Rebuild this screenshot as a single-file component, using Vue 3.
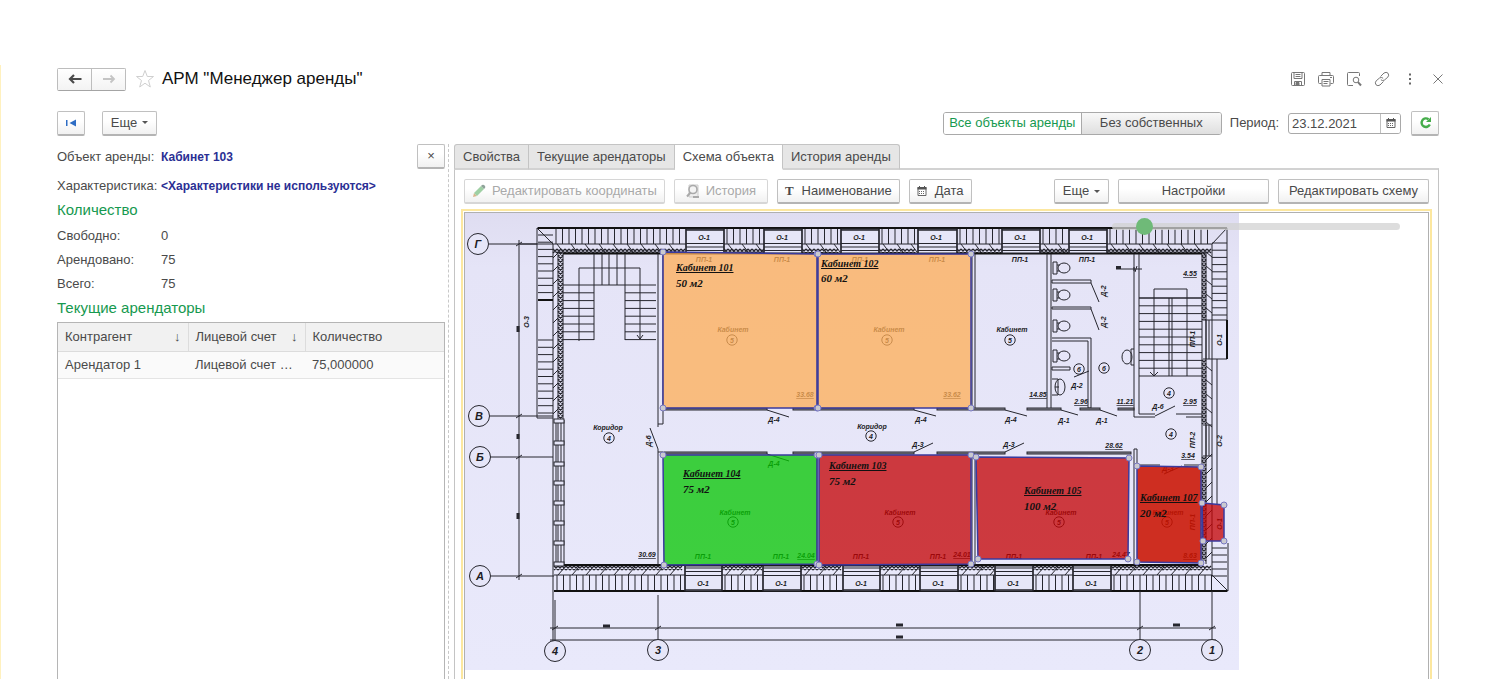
<script setup>
import { ref } from 'vue'

const period = ref('23.12.2021')
const zoom = ref(9)
const scope = ref('all')
const tabs = ['Свойства', 'Текущие арендаторы', 'Схема объекта', 'История аренды']
const activeTab = ref('Схема объекта')
const totals = [
  { label: 'Свободно:', value: '0' },
  { label: 'Арендовано:', value: '75' },
  { label: 'Всего:', value: '75' }
]
const tenants = [{ name: 'Арендатор 1', account: 'Лицевой счет …', amount: '75,000000' }]

const topWindows = [[686, 724], [764, 802], [841, 879], [918, 957], [1002, 1040], [1069, 1107]]
const bottomWindows = [[685, 722], [763, 801], [843, 880], [920, 958], [995, 1033], [1073, 1111]]

function gaps(windows, from, to) {
  const out = []
  let x = from
  for (const [a, b] of windows) {
    out.push([x, a])
    x = b
  }
  out.push([x, to])
  return out
}
const topGaps = gaps(topWindows, 553, 1212)
const bottomGaps = gaps(bottomWindows, 554, 1212)

function ticksX(list, y1, y2, step) {
  let d = ''
  for (const [a, b] of list) for (let x = a + 3; x < b; x += step) d += `M${x} ${y1}V${y2}`
  return d
}
function ticksY(x1, x2, y1, y2, step) {
  let d = ''
  for (let y = y1; y <= y2; y += step) d += `M${x1} ${y}H${x2}`
  return d
}
function slashX(list, y1, y2, step, dx) {
  let d = ''
  for (const [a, b] of list) for (let x = a + 4; x < b - 3; x += step) d += `M${x} ${y1}L${x + dx} ${y2}`
  return d
}
function slashY(x1, x2, from, to, step, dy) {
  let d = ''
  for (let y = from; y < to; y += step) d += `M${x1} ${y}L${x2} ${y + dy}`
  return d
}
function crossX(list, y1, y2) {
  let d = ''
  for (const [a, b] of list) for (let x = a; x + 4 <= b; x += 4) d += `M${x} ${y1}L${x + 4} ${y2}M${x + 4} ${y1}L${x} ${y2}`
  return d
}
function crossY(x1, x2, from, to) {
  let d = ''
  for (let y = from; y + 4 <= to; y += 4) d += `M${x1} ${y}L${x2} ${y + 4}M${x2} ${y}L${x1} ${y + 4}`
  return d
}

const hatch = [
  ticksX(topGaps, 228, 244, 6.5),
  ticksX(bottomGaps, 575, 591, 6.5),
  ticksY(538, 553, 235, 300, 7.2),
  ticksY(538, 553, 340, 418, 7.3),
  ticksY(1212, 1227, 243, 318, 7.2),
  ticksY(1212, 1227, 548, 578, 7),
  slashX(topGaps, 244, 252, 14, 6),
  slashX(bottomGaps, 575, 567, 14, 7),
  slashY(553, 558, 258, 418, 13, -5),
  slashY(1206, 1212, 252, 320, 14, 5),
  slashY(1206, 1212, 366, 425, 14, 5),
  slashY(1206, 1212, 460, 560, 14, -6)
].join('')
const rubble = [
  crossX(topGaps, 249, 253),
  crossX(bottomGaps, 566, 570),
  crossY(558, 563, 252, 420),
  crossY(1202, 1206, 252, 320),
  crossY(1202, 1206, 360, 425),
  crossY(1202, 1206, 457, 564)
].join('')
const treads = [
  ticksY(563, 594, 285, 341, 7.8),
  ticksY(625, 656, 285, 341, 7.8),
  ticksY(1139, 1202, 298, 376, 7.8)
].join('')
const piers = [419, 441, 462, 481, 501, 521, 541, 562]

const walls = [
  [664, 767, 408], [793, 914, 408], [937, 1005, 408], [1027, 1061, 408], [1080, 1100, 408], [1118, 1134, 408],
  [664, 767, 452], [793, 914, 452], [937, 1005, 452], [1027, 1131, 452]
]
const doors =
  'M767 410L789 417M914 410L936 416M1005 410L1027 416M1061 410L1078 415M1100 410L1117 416' +
  'M914 452L933 443M1005 452L1024 443M767 454L789 461M650 428L658 449' +
  'M1091 283L1099 302M1091 309L1099 330M1074 377L1089 371M1155 416L1175 406M1164 474L1182 466'

const toilets = [268, 295, 326, 356]

const axes = [
  { t: 'Г', x: 478, y: 244 }, { t: 'В', x: 479, y: 416 }, { t: 'Б', x: 480, y: 457 }, { t: 'А', x: 480, y: 576 },
  { t: '4', x: 555, y: 651 }, { t: '3', x: 658, y: 650 }, { t: '2', x: 1140, y: 650 }, { t: '1', x: 1212, y: 650 }
]
const marks = [
  ...topWindows.map(([a]) => ({ t: 'О-1', x: a + 18, y: 240 })),
  ...bottomWindows.map(([a]) => ({ t: 'О-1', x: a + 18, y: 586 })),
  ...[704, 782, 860, 937, 1020, 1087].map(x => ({ t: 'ПП-1', x, y: 262 })),
  ...[703, 781, 861, 938, 1014, 1094].map(x => ({ t: 'ПП-1', x, y: 559 })),
  ...[774, 921, 1011].map(x => ({ t: 'Д-4', x, y: 422 })),
  { t: 'Д-4', x: 774, y: 466 },
  { t: 'Д-1', x: 1064, y: 423 }, { t: 'Д-1', x: 1102, y: 423 },
  { t: 'Д-3', x: 918, y: 447 }, { t: 'Д-3', x: 1009, y: 447 },
  { t: 'Д-2', x: 1077, y: 388 }, { t: 'Д-6', x: 1158, y: 409 }, { t: 'Д-3', x: 1168, y: 471 },
  { t: 'Кабинет', x: 733, y: 332 }, { t: 'Кабинет', x: 889, y: 332 }, { t: 'Кабинет', x: 1012, y: 332 },
  { t: 'Кабинет', x: 735, y: 515 }, { t: 'Кабинет', x: 900, y: 515 }, { t: 'Кабинет', x: 1061, y: 515 }, { t: 'Кабинет', x: 1168, y: 515 },
  { t: 'Коридор', x: 608, y: 430 }, { t: 'Коридор', x: 872, y: 429 }
]
const areas = [
  { t: '33.68', x: 805, y: 397 }, { t: '33.62', x: 952, y: 397 }, { t: '14.85', x: 1038, y: 397 },
  { t: '2.96', x: 1081, y: 404 }, { t: '11.21', x: 1125, y: 404 }, { t: '2.95', x: 1190, y: 404 },
  { t: '4.55', x: 1190, y: 276 }, { t: '3.54', x: 1188, y: 458 }, { t: '28.62', x: 1114, y: 448 },
  { t: '30.69', x: 647, y: 557 }, { t: '24.04', x: 806, y: 558 }, { t: '24.01', x: 962, y: 557 },
  { t: '24.47', x: 1121, y: 557 }, { t: '8.63', x: 1190, y: 558 }
]
const upright = [
  { t: 'О-3', x: 529, y: 322 }, { t: 'Д-6', x: 651, y: 441 }, { t: 'Д-2', x: 1106, y: 291 }, { t: 'Д-2', x: 1106, y: 322 },
  { t: 'ПП-1', x: 1195, y: 339 }, { t: 'О-1', x: 1222, y: 340 }, { t: 'ПП-2', x: 1195, y: 440 }, { t: 'О-2', x: 1222, y: 441 },
  { t: 'ПП-1', x: 1195, y: 522 }, { t: 'О-1', x: 1222, y: 524 }
]
const numbers = [
  { t: '5', x: 732, y: 340 }, { t: '5', x: 887, y: 340 }, { t: '5', x: 1010, y: 340 }, { t: '5', x: 733, y: 522 },
  { t: '5', x: 898, y: 522 }, { t: '5', x: 1059, y: 522 }, { t: '5', x: 1167, y: 522 }, { t: '4', x: 609, y: 438 },
  { t: '4', x: 871, y: 436 }, { t: '6', x: 1079, y: 369 }, { t: '6', x: 1104, y: 368 }, { t: '4', x: 1169, y: 393 }, { t: '4', x: 1171, y: 434 }
]
const rooms = [
  { c: 'orange', p: [[663, 252], [817, 254], [817, 408], [663, 408]], name: 'Кабинет 101', area: '50 м2', x: 676, y: 271, ay: 287 },
  { c: 'orange', p: [[818, 254], [971, 254], [971, 408], [818, 408]], name: 'Кабинет 102', area: '60 м2', x: 821, y: 267, ay: 282 },
  { c: 'green', p: [[663, 455], [817, 455], [817, 564], [664, 565]], name: 'Кабинет 104', area: '75 м2', x: 683, y: 477, ay: 493 },
  { c: 'red', p: [[819, 455], [971, 455], [971, 564], [819, 565]], name: 'Кабинет 103', area: '75 м2', x: 829, y: 469, ay: 485 },
  { c: 'red', p: [[976, 457], [1129, 458], [1128, 559], [978, 559]], name: 'Кабинет 105', area: '100 м2', x: 1024, y: 494, ay: 510 },
  { c: 'scarlet', p: [[1137, 466], [1201, 467], [1201, 563], [1137, 562]], name: 'Кабинет 107', area: '20 м2', x: 1140, y: 501, ay: 517 },
  { c: 'red', p: [[1202, 503], [1224, 505], [1224, 541], [1203, 541]] }
]
</script>

<template>
  <div class="page">
    <header class="title-row">
      <div class="nav">
        <button type="button" aria-label="Назад">
          <svg width="14" height="10" viewBox="0 0 14 10"><path d="M6 1L2 5l4 4M2.500 5H13.500" fill="none" stroke="#4a4a4a" stroke-width="2.200" /></svg>
        </button>
        <button type="button" aria-label="Вперед">
          <svg width="14" height="10" viewBox="0 0 14 10"><path d="M8.500 1.500L12 5 8.500 8.500M12 5H1" fill="none" stroke="#c4c4c4" stroke-width="1.800" /></svg>
        </button>
      </div>
      <svg class="star" width="20" height="20" viewBox="0 0 20 20"><path d="M10 1.500l2.300 6h6.200l-5 4 1.800 6.500L10 14.200 4.700 18l1.800-6.500-5-4h6.200z" fill="#fff" stroke="#cfcfcf" /></svg>
      <h1>АРМ "Менеджер аренды"</h1>
      <div class="window-tools">
        <button type="button" aria-label="Сохранить"><svg viewBox="0 0 16 16"><path d="M1.500 2.500q0-1 1-1h11q1 0 1 1v11q0 1-1 1h-11q-1 0-1-1zM4 1.500v6h8v-6M5.500 3.500h5M5.500 5.500h5M4.500 14.500v-4h7v4" /><path d="M6 11.500h3v3H6z" fill="#777" /></svg></button>
        <button type="button" aria-label="Печать"><svg viewBox="0 0 16 16"><path d="M4 4.500v-3h8v3M3.500 12.500h-2q-1 0-1-1v-6q0-1 1-1h13q1 0 1 1v6q0 1-1 1h-2M4 8.500h8v6.500H4zM5.500 10.500h5M5.500 12.500h4M12 6.500h2" /></svg></button>
        <button type="button" aria-label="Просмотр"><svg viewBox="0 0 16 16"><path d="M7 14.500H2.500q-1 0-1-1v-11q0-1 1-1h10q1 0 1 1V5" /><circle cx="10" cy="9" r="2.800" /><path d="M12 11.200l3 3.300" stroke-width="2" /></svg></button>
        <button type="button" aria-label="Ссылка"><svg viewBox="0 0 16 16"><path d="M6.500 5.500l3.500-3.500q2.200-1.500 4 .2 1.500 2-.2 4L10.500 9q-1.800 1.200-3.600-.2M9.500 10.500L6 14q-2.200 1.500-4-.2-1.500-2 .2-4L5.500 7q1.800-1.200 3.600.2" /></svg></button>
        <button type="button" aria-label="Меню"><svg viewBox="0 0 16 16"><path d="M7 2.500h2v2H7zM7 7h2v2H7zM7 11.500h2v2H7z" class="solid" /></svg></button>
        <button type="button" aria-label="Закрыть"><svg viewBox="0 0 16 16"><path d="M3.500 3.500l9 9M12.500 3.500l-9 9" /></svg></button>
      </div>
    </header>

    <div class="command-row">
      <button type="button" class="btn square" aria-label="В начало">
        <svg width="12" height="8" viewBox="0 0 12 8"><path d="M1 1h1.500v6H1zM11 .5v7L4.500 4z" fill="#2e6dc4" /></svg>
      </button>
      <button type="button" class="btn more first">Еще <i class="caret"></i></button>
      <div class="scope">
        <button type="button" :class="{ on: scope === 'all' }" @click="scope = 'all'">Все объекты аренды</button>
        <button type="button" class="wide" :class="{ on: scope === 'own' }" @click="scope = 'own'">Без собственных</button>
      </div>
      <label for="period">Период:</label>
      <div class="date">
        <input id="period" v-model="period" type="text" />
        <button type="button" aria-label="Выбрать дату">
          <svg width="10" height="10" viewBox="0 0 10 10"><path d="M1 1.500h8v8H1z" fill="#fff" stroke="#666" /><path d="M.5 1h9v2.500h-9zM2 0h1v1H2zM7 0h1v1H7z" fill="#555" /><path d="M2 5.500h6M2 7.500h6" stroke="#666" stroke-dasharray="1 1" /></svg>
        </button>
      </div>
      <button type="button" class="btn square" aria-label="Обновить">
        <svg width="13" height="13" viewBox="0 0 13 13"><path d="M9.500 3.200A4.300 4.300 0 1 0 10.800 8.500" fill="none" stroke="#45ad4b" stroke-width="2.400" /><path d="M12 1v5H7z" fill="#45ad4b" /></svg>
      </button>
    </div>

    <div class="body">
      <section class="details">
        <div class="field top">
          <span class="cap">Объект аренды:</span><a href="#">Кабинет 103</a>
          <button type="button" class="btn square close" aria-label="Закрыть панель">×</button>
        </div>
        <div class="field"><span class="cap">Характеристика:</span><a href="#">&lt;Характеристики не используются&gt;</a></div>
        <h2>Количество</h2>
        <div v-for="t in totals" :key="t.label" class="field"><span class="cap">{{ t.label }}</span><span>{{ t.value }}</span></div>
        <h2>Текущие арендаторы</h2>
        <div class="grid-box">
          <table>
            <colgroup><col class="c1" /><col class="c2" /><col /></colgroup>
            <thead>
              <tr><th>Контрагент<span class="sort">↓</span></th><th>Лицевой счет<span class="sort">↓</span></th><th>Количество</th></tr>
            </thead>
            <tbody>
              <tr v-for="t in tenants" :key="t.name"><td>{{ t.name }}</td><td>{{ t.account }}</td><td>{{ t.amount }}</td></tr>
            </tbody>
          </table>
        </div>
      </section>

      <div class="splitter"></div>

      <section class="work">
        <div class="tabs" role="tablist">
          <button v-for="t in tabs" :key="t" type="button" role="tab" :aria-selected="t === activeTab" :class="{ active: t === activeTab }" @click="activeTab = t">{{ t }}</button>
        </div>
        <div class="panel">
          <div class="toolbar">
            <button type="button" class="btn tool" disabled>
              <svg width="14" height="14" viewBox="0 0 14 14"><path d="M1 13l1-4 3 3z" fill="#d9b48c" /><path d="M2 9l7-7 3 3-7 7z" fill="#9fd0a4" /><path d="M9 2l1-1q1-.6 2 0l1 1q.6 1 0 2l-1 1z" fill="#8fa39a" /></svg>
              Редактировать координаты
            </button>
            <button type="button" class="btn tool history" disabled>
              <svg width="14" height="14" viewBox="0 0 14 14"><path d="M3 1h9v12H3z" fill="#eee" stroke="#ccc" /><circle cx="7" cy="5.500" r="4" fill="#f4f4f4" stroke="#aaa" stroke-width="1.600" /><path d="M4.500 8.500L1 12.500M7 13h6" stroke="#aaa" stroke-width="2" /></svg>
              История
            </button>
            <button type="button" class="btn tool"><b class="tee">T</b> Наименование</button>
            <button type="button" class="btn tool">
              <svg width="10" height="10" viewBox="0 0 10 10"><path d="M1 1.500h8v8H1z" fill="#fff" stroke="#666" /><path d="M.5 1h9v2.500h-9zM2 0h1v1H2zM7 0h1v1H7z" fill="#555" /><path d="M2 5.500h6M2 7.500h6" stroke="#666" stroke-dasharray="1 1" /></svg>
              Дата
            </button>
            <span class="spring"></span>
            <button type="button" class="btn more">Еще <i class="caret"></i></button>
            <button type="button" class="btn big">Настройки</button>
            <button type="button" class="btn big">Редактировать схему</button>
          </div>

          <div class="canvas">
            <div class="sheet">
              <svg class="plan" width="774" height="457" viewBox="465 213 774 457">
                <defs>
                  <linearGradient id="paper" x1="0" y1="0" x2="0" y2="1">
                    <stop offset="0" stop-color="#dfddf1" />
                    <stop offset=".12" stop-color="#e5e4f7" />
                    <stop offset="1" stop-color="#e9e9fb" />
                  </linearGradient>
                </defs>
                <rect x="465" y="213" width="774" height="457" fill="url(#paper)" />
                <g class="ink">
                  <path :d="hatch" />
                  <path :d="rubble" class="bold" />
                  <path d="M537 228H1227V320M537 228V418H553M553 244H1212V320M537 228L553 244M1227 228L1212 244M554 575H1212V543M554 591H1228V543M1228 591L1212 575M553 244V645M553 244H520" />
                  <path d="M563 253V419M564 420V565M558 252V565M1202 253V564M1206 253V564M1212 359V543M1217 359V505M1203 320H1227V359H1203M1206 320V359M1209 320V359M1212 320V359M1206 425V456M1209 425V456M1203 425H1212M1203 456H1212" />
                  <path d="M538 228H1227M538 300H553M563 253.500H1202M555 565H1202M1227 320V359M554 591H1227" class="heavy" />
                  <path d="M556 420V565M561 420V565" />
                  <rect v-for="y in piers" :key="y" x="554" :y="y" width="10" height="4" class="paper" />
                  <g v-for="w in topWindows" :key="'t' + w[0]">
                    <rect :x="w[0]" y="229" :width="w[1] - w[0]" height="24" class="paper" />
                    <path :d="`M${w[0]} 229V253M${w[1]} 229V253M${w[0]} 230H${w[1]}`" class="bold" />
                    <path :d="`M${w[0]} 243.500H${w[1]}M${w[0]} 247H${w[1]}M${w[0]} 250.500H${w[1]}`" />
                  </g>
                  <g v-for="w in bottomWindows" :key="'b' + w[0]">
                    <rect :x="w[0]" y="566" :width="w[1] - w[0]" height="25" class="paper" />
                    <path :d="`M${w[0]} 566V591M${w[1]} 566V591M${w[0]} 590H${w[1]}`" class="bold" />
                    <path :d="`M${w[0]} 568H${w[1]}M${w[0]} 571.500H${w[1]}M${w[0]} 575.500H${w[1]}`" />
                  </g>
                  <path :d="treads" />
                  <path d="M594 254V340M602 254V285M609 254V285M617 254V285M625 254V340M594 285H625M579 341V268H640V339M637 335l3 4 3-4M1154 376V289H1187V376M1150 372l4 4 4-4M1139 298H1202M1139 376H1202M1169 298V376M1172 298V376" />
                  <path d="M658 254V427M663 254V424H658M658 449V565M663 452H658M817 254V408M972 254V408M975 254V408M972 455V565M975 455V565M817 455V565" />
                  <path d="M1047 254V408M1051 254V408M1134 254V417H1155M1139 254V414H1155M1176 414H1202M1186 417H1202M1134 565V449H1137V466M1137 465H1160M1184 465H1202" />
                  <path d="M1052 280H1091V283H1052zM1052 307H1091V309H1052zM1052 338H1091V408H1088V341H1052M1052 367H1070V370H1052z" />
                  <g v-for="y in toilets" :key="y">
                    <path :d="`M1053 ${y - 6}h4v12h-4zM1057 ${y - 3}h3M1057 ${y + 3}h3`" />
                    <ellipse cx="1064" :cy="y" rx="6" ry="5" />
                  </g>
                  <path d="M1052 379h6v16h-6" /><ellipse cx="1060" cy="387" rx="5" ry="8" /><path d="M1055 387h4" />
                  <path d="M1134 349h-3v16h3" /><ellipse cx="1127" cy="357" rx="5" ry="7" />
                  <path :d="doors" />
                  <rect v-for="w in walls" :key="w.join()" :x="w[0]" :y="w[2]" :width="w[1] - w[0]" height="2" class="wall" />
                  <path d="M489 244H537M490 416H553M490 457H553M491 576H554M519 240V580M555 600V640M658 595V640M1140 591V640M1212 591V640M550 628H1216M550 640H1216" />
                  <path d="M516 246l6-4M516 418l6-4M516 459l6-4M516 578l6-4M552 630l6-4M655 630l6-4M1137 630l6-4M1209 630l6-4M1116 269H1142M1137 266l-2 6M1134 267v4" />
                  <path d="M518 326v6M518 434v5M518 513v6M603 626h7M896 625h7M1173 625h7M896 637h7M1116 267.500h5" class="smudge" />
                  <g v-for="a in axes" :key="a.t + a.x">
                    <circle :cx="a.x" :cy="a.y" r="10.500" class="paper" />
                    <text :x="a.x" :y="a.y + 4" class="axis">{{ a.t }}</text>
                  </g>
                  <text v-for="m in marks" :key="m.t + m.x + m.y" :x="m.x" :y="m.y" class="mark">{{ m.t }}</text>
                  <text v-for="m in areas" :key="m.t" :x="m.x" :y="m.y" class="mark under">{{ m.t }}</text>
                  <text v-for="m in upright" :key="m.t + m.x + m.y" class="mark" :transform="`translate(${m.x} ${m.y}) rotate(-90)`">{{ m.t }}</text>
                  <g v-for="n in numbers" :key="'n' + n.x + n.y">
                    <circle :cx="n.x" :cy="n.y" r="5.200" />
                    <text :x="n.x" :y="n.y + 3" class="mark">{{ n.t }}</text>
                  </g>
                </g>
                <g v-for="(r, i) in rooms" :key="'r' + i" class="room">
                  <polygon :points="r.p.join(' ')" :class="r.c" />
                  <circle v-for="(q, j) in r.p" :key="j" :cx="q[0]" :cy="q[1]" r="3" />
                </g>
                <g v-for="(r, i) in rooms.filter(r => r.name)" :key="'l' + i" class="room-label">
                  <text :x="r.x" :y="r.y" class="name">{{ r.name }}</text>
                  <text :x="r.x" :y="r.ay" class="area">{{ r.area }}</text>
                </g>
              </svg>
              <input v-model="zoom" class="zoom" type="range" min="0" max="100" aria-label="Масштаб" />
            </div>
          </div>
        </div>
      </section>
    </div>
  </div>
</template>

<style>
body { margin: 0; background: #fff; }
</style>

<style scoped>
.page {
  box-sizing: border-box;
  height: 100vh;
  padding: 66px 62px 0 57px;
  display: flex;
  flex-direction: column;
  overflow: hidden;
  font: 13px/16px "Liberation Sans", Arial, sans-serif;
  color: #4a4a4a;
  background: linear-gradient(#fff1bf, #fff1bf) 0 65px / 1px 100% no-repeat #fff;
}
button, input { font: inherit; color: inherit; margin: 0; }
button { cursor: pointer; white-space: nowrap; }
.title-row { display: flex; align-items: center; height: 26px; }
.nav { display: flex; border: 1px solid #bdbdbd; border-bottom-color: #a4a4a4; border-radius: 2px; }
.nav button { width: 33px; height: 21px; padding: 0; border: 0; background: linear-gradient(#fff, #f3f3f3); display: grid; place-items: center; }
.nav button:first-child { width: 34px; border-right: 1px solid #bdbdbd; }
.star { margin-left: 9px; }
h1 { margin: 0 0 0 7px; font-size: 17px; line-height: 22px; font-weight: 400; color: #111; }
.window-tools { margin-left: auto; margin-right: -8px; display: flex; gap: 10px; }
.window-tools button { width: 18px; height: 18px; padding: 0; border: 0; background: none; display: grid; place-items: center; }
.window-tools svg { width: 16px; height: 16px; fill: none; stroke: #777; stroke-width: 1; }
.window-tools .solid { fill: #666; stroke: none; }
.btn {
  box-sizing: border-box;
  height: 25px;
  padding: 0;
  display: flex;
  align-items: center;
  justify-content: center;
  gap: 8px;
  border: 1px solid #c0c0c0;
  border-bottom: 2px solid #b4b4b4;
  border-radius: 2px;
  background: linear-gradient(#fff 40%, #f1f1f1);
}
.btn:disabled { color: #a9a9a9; border-color: #d6d6d6; gap: 6px; }
.btn.tool { padding: 0 7px; }
.btn.history { width: 94px; }
.btn.square { width: 28px; }
.btn.more { width: 55px; gap: 5px; }
.btn.big { width: 151px; }
.caret { border: 3px solid transparent; border-top-color: #555; border-bottom: 0; }
.command-row { display: flex; align-items: center; height: 26px; margin-top: 18px; }
.btn.first { margin-left: 17px; }
.scope { margin-left: auto; display: flex; border: 1px solid #a9a9a9; border-radius: 3px; overflow: hidden; }
.scope button { height: 21px; width: 137px; padding: 0; border: 0; background: linear-gradient(#f8f8f8, #dfdfdf); }
.scope .wide { width: 140px; border-left: 1px solid #a9a9a9; }
.scope .on { background: #fff; color: #16994f; }
label { margin: 0 9px 0 8px; }
.date { display: flex; border: 1px solid #a9a9a9; border-radius: 3px; margin-right: 10px; overflow: hidden; }
.date input { box-sizing: border-box; width: 91px; height: 19px; padding: 0 3px; border: 0; outline: 0; background: none; }
.date button { width: 20px; padding: 0; border: 0; border-left: 1px solid #c0c0c0; background: #fff; display: grid; place-items: center; }
.body { flex: 1; min-height: 0; display: flex; margin-top: 8px; }
.details { width: 388px; display: flex; flex-direction: column; }
.field { display: flex; align-items: center; height: 24px; }
.field.top { height: 25px; margin-bottom: 5px; }
.cap { width: 104px; flex: none; }
.details a { color: #2b2f94; font-weight: 700; font-size: 12px; text-decoration: none; }
.close { margin-left: auto; }
h2 { margin: 0 0 2px; font-size: 15px; line-height: 24px; font-weight: 400; color: #16994f; }
.grid-box { flex: 1; border: 1px solid #b5b5b5; border-bottom: 0; }
table { width: 100%; border-collapse: collapse; table-layout: fixed; }
.c1 { width: 130px; }
.c2 { width: 117px; }
th, td { height: 28px; padding: 0 7px; text-align: left; font-weight: 400; overflow: hidden; text-overflow: ellipsis; white-space: nowrap; }
th { background: #f1f1f1; border-right: 1px solid #dcdcdc; border-bottom: 1px solid #dcdcdc; }
th:last-child { border-right: 0; }
td { height: 26px; background: #fafafa; border-bottom: 1px solid #e4e4e4; }
.sort { float: right; }
.splitter { width: 9px; box-sizing: border-box; border-left: 1px dashed #c8c8c8; margin-left: 3px; margin-right: -3px; }
.work { flex: 1; min-width: 0; display: flex; flex-direction: column; }
.tabs { display: flex; position: relative; }
.tabs button { height: 26px; margin: 0 0 -2px; padding: 0 8px; border: 1px solid #c4c4c4; border-left-width: 0; border-bottom: 2px solid #d2d2d2; background: #e6e6e6; }
.tabs button:first-child { border-left-width: 1px; border-radius: 3px 0 0; }
.tabs button:last-child { border-radius: 0 3px 0 0; }
.tabs .active { background: #fff; border-bottom-color: #fff; }
.panel { flex: 1; min-height: 0; display: flex; flex-direction: column; border: 1px solid #c4c4c4; border-top: 2px solid #d2d2d2; border-bottom: 0; padding: 9px 6px 0; }
.toolbar { display: flex; gap: 9px; padding: 0 3px; }
.tee { font-family: "Liberation Serif", serif; }
.spring { flex: 1; }
.canvas { flex: 1; min-height: 0; margin-top: 5px; border: 2px solid #fce79f; border-bottom: 0; padding: 1px 1px 0; }
.sheet { position: relative; height: 100%; border: 1px solid #b0b0b0; border-bottom: 0; overflow: hidden; }
.plan { display: block; }
.zoom { position: absolute; top: 5px; right: 28px; width: 288px; height: 16px; appearance: none; background: none; }
.zoom::-webkit-slider-runnable-track { height: 7px; border-radius: 4px; background: rgba(210, 210, 210, .75); }
.zoom::-webkit-slider-thumb { appearance: none; width: 17px; height: 17px; margin-top: -5px; border-radius: 50%; background: #6fba78; }
.ink { fill: none; stroke: #26262e; stroke-width: 1; }
.ink .bold { stroke-width: 1.4; }
.ink .heavy { stroke-width: 2; stroke: #111; }
.ink .smudge { stroke-width: 3; }
.ink .paper { fill: #e6e6f8; }
.ink .wall { fill: #8a8a96; }
.ink text { fill: #1c1c24; stroke: none; text-anchor: middle; font-family: "Liberation Sans", Arial, sans-serif; font-style: italic; font-weight: 700; }
.ink .mark { font-size: 7px; }
.ink .under { text-decoration: underline; }
.ink .axis { font-size: 11px; }
.room polygon { stroke: #3a3a9e; stroke-width: 1.500; }
.room circle { fill: #c9c9cf; stroke: #7777c0; stroke-width: 1; }
.orange { fill: rgba(255, 173, 86, .75); }
.green { fill: rgba(6, 199, 2, .76); }
.red { fill: rgba(196, 2, 4, .76); }
.scarlet { fill: rgba(202, 18, 0, .87); }
.room-label { fill: #111; font-family: "Liberation Serif", "Times New Roman", serif; font-style: italic; font-size: 11px; }
.room-label .name { text-decoration: underline; font-size: 10px; font-weight: 700; }
.room-label .area { font-weight: 700; }
</style>
